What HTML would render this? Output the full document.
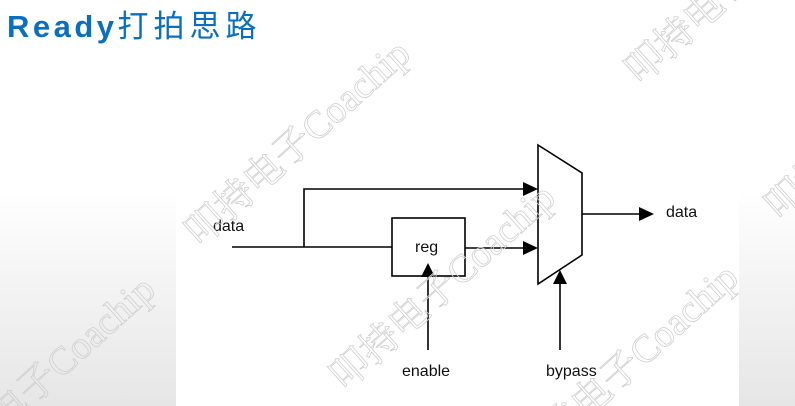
<!DOCTYPE html>
<html><head><meta charset="utf-8">
<style>
html,body{margin:0;padding:0;width:795px;height:406px;overflow:hidden;}
body{position:relative;
background:linear-gradient(to bottom,#ffffff 0px,#ffffff 190px,#f3f3f3 290px,#e6e6e6 406px);}
svg{position:absolute;left:0;top:0;display:block;}
</style></head><body>
<svg width="795" height="406" viewBox="0 0 795 406" xmlns="http://www.w3.org/2000/svg" overflow="hidden">
<rect x="176" y="133" width="563" height="273" fill="#ffffff"/>
<text x="7" y="37" font-family="Liberation Sans, Noto Sans CJK SC, sans-serif" font-size="31" font-weight="bold" fill="#0b6fc0" letter-spacing="3.5">Ready<tspan font-weight="normal" letter-spacing="5">打拍思路</tspan></text>

<g stroke="#000" stroke-width="1.6" fill="none">
<polyline points="232,247 392,247"/>
<polyline points="304,247 304,189 526,189"/>
<rect x="392" y="218" width="73" height="58"/>
<line x1="465" y1="248" x2="526" y2="248"/>
<polygon points="538,145 582,173 582,255 538,284"/>
<line x1="582" y1="214" x2="642" y2="214"/>
<line x1="428" y1="350" x2="428" y2="270"/>
<line x1="560" y1="350" x2="560" y2="278"/>
</g>
<g fill="#000">
<polygon points="538,189 523,182 523,196"/>
<polygon points="538,248 523,241 523,255"/>
<polygon points="654,214 639,207 639,221"/>
<polygon points="428,263 421,277 435,277"/>
<polygon points="560,270 553,284 567,284"/>
</g>
<g font-family="Liberation Sans, sans-serif" font-size="16" fill="#111">
<text x="213" y="231">data</text>
<text x="415" y="252">reg</text>
<text x="666" y="217">data</text>
<text x="402" y="376">enable</text>
<text x="546" y="376">bypass</text>
</g>
<g font-family="Liberation Serif, Noto Serif CJK SC, serif" font-size="39" fill="none" stroke="#cfcfcf" stroke-width="0.8">
<text transform="translate(200,248) rotate(-42)">叩持电子Coachip</text>
<text transform="translate(345,392) rotate(-42)">叩持电子Coachip</text>
<text transform="translate(-55,484) rotate(-42)">叩持电子Coachip</text>
<text transform="translate(528,472) rotate(-42)">叩持电子Coachip</text>
<text transform="translate(640,86) rotate(-42)">叩持电子Coachip</text>
<text transform="translate(780,222) rotate(-42)">叩持电子Coachip</text>
</g>
</svg>
</body></html>
